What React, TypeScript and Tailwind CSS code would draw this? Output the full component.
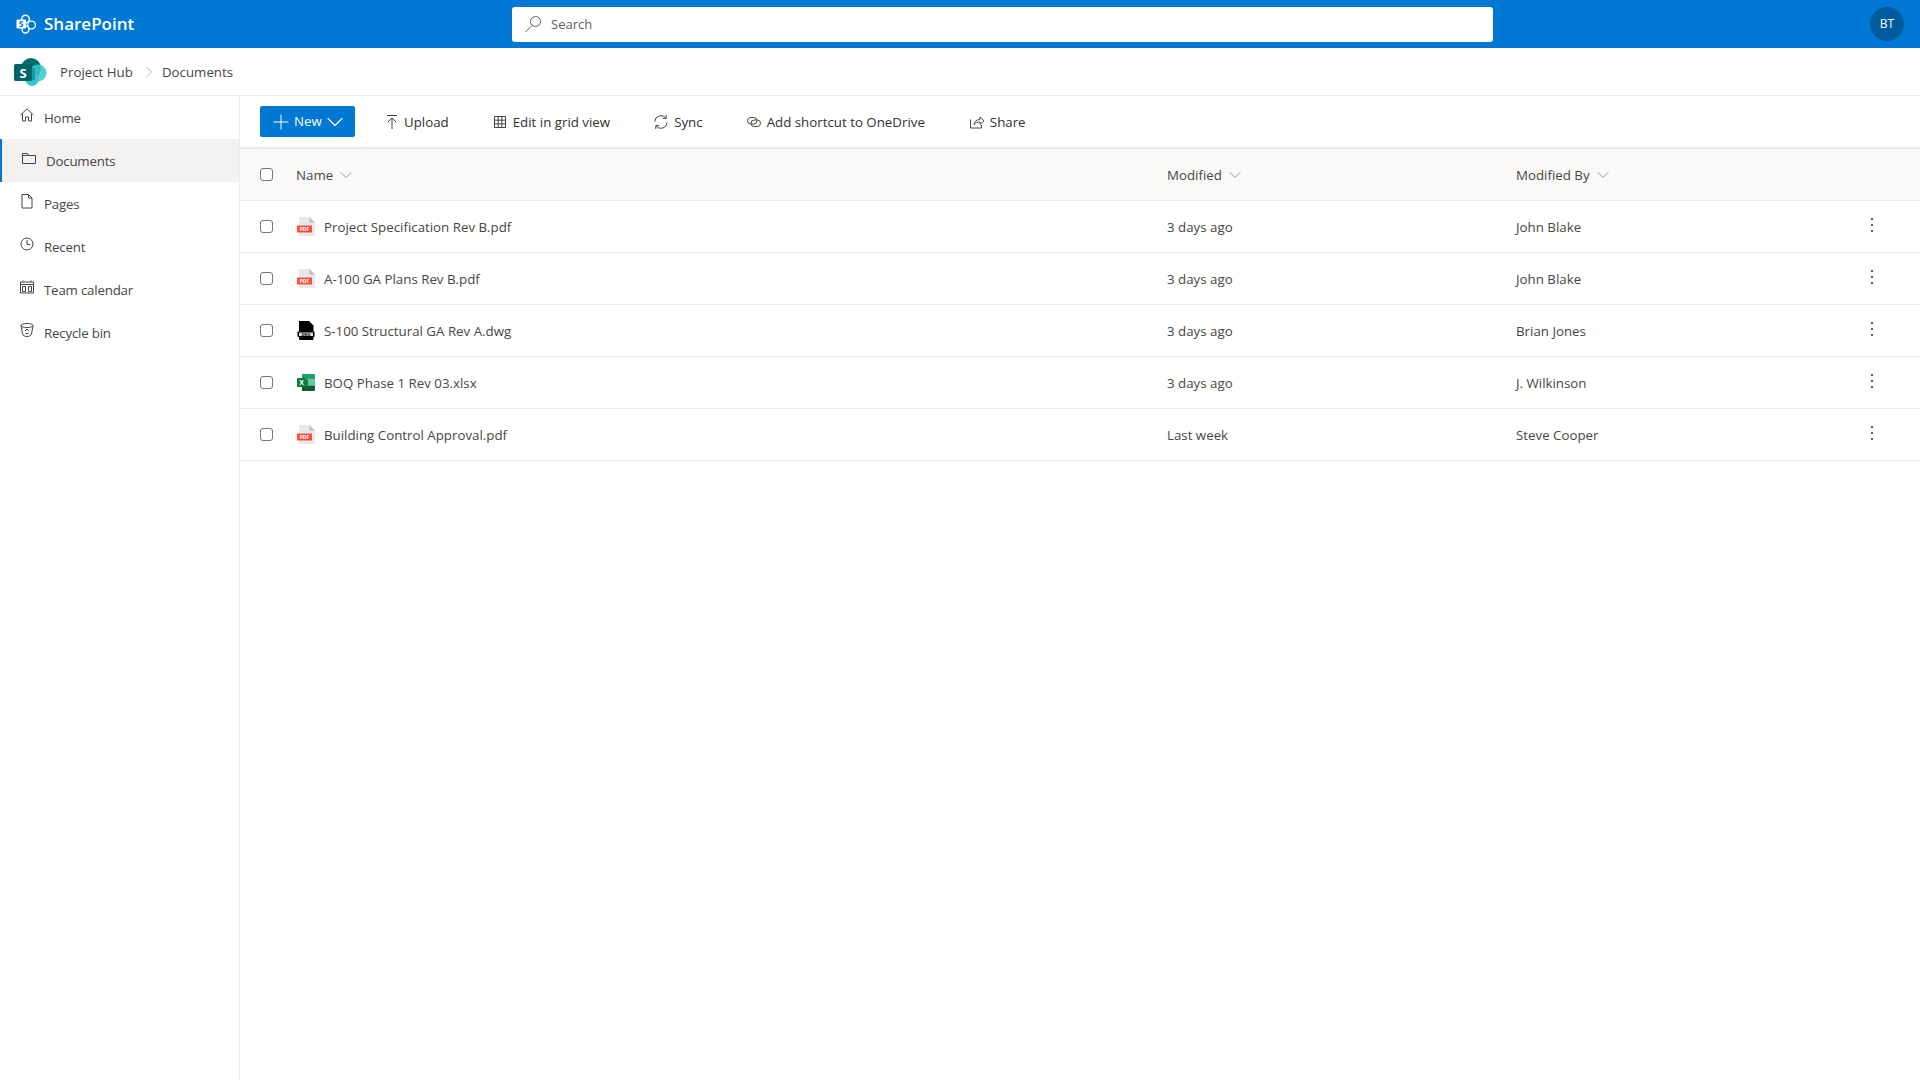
import { ChevronDown, ChevronRight, Plus } from "lucide-react";

const NAV = [
  { label: "Home", icon: "home" },
  { label: "Documents", icon: "folder", active: true },
  { label: "Pages", icon: "page" },
  { label: "Recent", icon: "clock" },
  { label: "Team calendar", icon: "calendar" },
  { label: "Recycle bin", icon: "bin" },
];

const FILES = [
  { name: "Project Specification Rev B.pdf", type: "pdf", modified: "3 days ago", by: "John Blake" },
  { name: "A-100 GA Plans Rev B.pdf", type: "pdf", modified: "3 days ago", by: "John Blake" },
  { name: "S-100 Structural GA Rev A.dwg", type: "dwg", modified: "3 days ago", by: "Brian Jones" },
  { name: "BOQ Phase 1 Rev 03.xlsx", type: "xlsx", modified: "3 days ago", by: "J. Wilkinson" },
  { name: "Building Control Approval.pdf", type: "pdf", modified: "Last week", by: "Steve Cooper" },
];

function Glyph({ name }: { name: string }) {
  const common = { fill: "none", stroke: "#484644", strokeWidth: 1 };
  return (
    <svg width="16" height="16" viewBox="0 0 16 16" className="shrink-0">
      {name === "home" && <path {...common} d="M1.5 8 8 1.8 14.5 8M3.5 6.5v7.5h3v-4h3v4h3V6.5" />}
      {name === "folder" && <path {...common} d="M1.5 3.5h5l1.5 2h6.5v8h-13zM1.5 5.500h6.500" />}
      {name === "page" && <path {...common} d="M3 1.5h6.500L13 5v10H3zM9.500 1.500V5H13" />}
      {name === "clock" && (
        <g {...common}>
          <circle cx="8" cy="8" r="6" />
          <path d="M8 4v4.500h3" />
        </g>
      )}
      {name === "calendar" && <path {...common} d="M1.500 3h13v11h-13zM1.500 5.500h13M4 1.500V3M12 1.500V3M3.500 7.500h3v5h-3zM9.500 7.500h3v5h-3z" />}
      {name === "bin" && (
        <g {...common}>
          <ellipse cx="8" cy="3.500" rx="6" ry="2" />
          <path d="M2 3.500 3.500 12c.3 1.600 2.500 2.500 4.500 2.500s4.200-.9 4.500-2.500L14 3.500M6 9l2-2 2 2M6.500 11.500h3" />
        </g>
      )}
      {name === "upload" && <path {...common} d="M3 1.500h10M8 15V4M3.800 8.200 8 4l4.200 4.200" />}
      {name === "grid" && <path {...common} d="M2.500 2.500h11v11h-11zM2.500 6.200h11M2.500 9.800h11M6.200 2.500v11M9.800 2.500v11" />}
      {name === "sync" && <path {...common} d="M1.800 7.500A6.200 6.200 0 0 1 13 4.200M13.200 1v3.400h-3.400M14.200 8.500A6.200 6.200 0 0 1 3 11.800M2.800 15v-3.400h3.400" />}
      {name === "shortcut" && (
        <g {...common}>
          <rect x="1.500" y="3.500" width="9.500" height="6.500" rx="3.200" />
          <rect x="5" y="6" width="9.500" height="6.500" rx="3.200" />
        </g>
      )}
      {name === "share" && <path {...common} d="M1.500 5.500v8.500h11V11M5 10.500c.5-3 2.500-5 6-5V3l4 3.800-4 3.800V8c-2.500 0-4.500.8-6 2.500z" />}
    </svg>
  );
}

function SearchGlyph() {
  return (
    <svg width="18" height="18" viewBox="0 0 18 18" className="shrink-0">
      <g fill="none" stroke="#605e5c" strokeWidth="1">
        <circle cx="11.500" cy="6.500" r="5" />
        <path d="M8 10.500 1.500 17" />
      </g>
    </svg>
  );
}

function SharePointMark() {
  return (
    <svg width="21" height="20" viewBox="0 0 21 20" className="shrink-0">
      <g fill="none" stroke="#fff" strokeWidth="1.400">
        <circle cx="9.500" cy="5" r="3.800" />
        <circle cx="15.500" cy="11" r="3.900" />
        <circle cx="9.500" cy="15.500" r="3.500" />
      </g>
      <rect x="0.500" y="5.500" width="9.500" height="9" rx="0.800" fill="#fff" />
      <text x="5.200" y="13.200" textAnchor="middle" fontSize="8.500" fontWeight="700" fill="#0078d4" fontFamily="Open Sans, sans-serif">S</text>
    </svg>
  );
}

function SiteLogo() {
  return (
    <svg width="33" height="28" viewBox="0 0 33 28" className="shrink-0">
      <circle cx="17" cy="10" r="10" fill="#036c70" />
      <circle cx="24" cy="15" r="8.500" fill="#37c6d0" opacity="0.85" />
      <circle cx="18" cy="21.500" r="6.500" fill="#37c6d0" />
      <path d="M14 10h7v12a6.500 6.500 0 0 1-7-2z" fill="#1a9ba1" />
      <rect x="0" y="6" width="18" height="17" rx="1.500" fill="#03646a" />
      <text x="9" y="19.500" textAnchor="middle" fontSize="13" fontWeight="700" fill="#fff" fontFamily="Open Sans, sans-serif">S</text>
    </svg>
  );
}

function FileIcon({ type }: { type: string }) {
  if (type === "xlsx") {
    return (
      <svg width="18" height="17" viewBox="0 0 18 17" className="shrink-0">
        <path d="M5 0h12a1 1 0 0 1 1 1v4.500H5z" fill="#21a366" />
        <path d="M5 5.500h6.500v6H5z" fill="#107c41" />
        <path d="M11.500 5.500H18v6h-6.500z" fill="#33c481" opacity="0.8" />
        <path d="M5 11.500h13V16a1 1 0 0 1-1 1H5z" fill="#185c37" />
        <rect x="0" y="4" width="9" height="9" rx="0.800" fill="#107c41" />
        <text x="4.500" y="11.300" textAnchor="middle" fontSize="7" fontWeight="700" fill="#fff" fontFamily="Open Sans, sans-serif">X</text>
      </svg>
    );
  }
  if (type === "dwg") {
    return (
      <svg width="18" height="19" viewBox="0 0 18 19" className="shrink-0">
        <path d="M2 0h10l4.500 4.500V18a1 1 0 0 1-1 1H3a1 1 0 0 1-1-1z" fill="#000" />
        <rect x="0.500" y="10.500" width="17" height="5.500" rx="0.800" fill="#000" />
        <rect x="2" y="11.500" width="14" height="3.500" fill="#d8d8d8" />
        <text x="9" y="14.500" textAnchor="middle" fontSize="3.500" fontWeight="700" fill="#000" fontFamily="Open Sans, sans-serif">DWG</text>
      </svg>
    );
  }
  return (
    <svg width="18" height="19" viewBox="0 0 18 19" className="shrink-0">
      <path d="M2 0h10.500L18 5.500V19H2z" fill="#e8e8ea" />
      <path d="M12.500 0 18 5.500h-5.500z" fill="#bfbfc4" />
      <rect x="0" y="8.500" width="15" height="7" fill="#f4503c" />
      <text x="7.500" y="14.200" textAnchor="middle" fontSize="5" fontWeight="700" fill="#fff" fontFamily="Open Sans, sans-serif">PDF</text>
    </svg>
  );
}

function Check() {
  return <span className="w-[13px] h-[13px] shrink-0 rounded-[3px] border border-[#767676] bg-white" />;
}

function ToolbarButton({ icon, label, className }: { icon: string; label: string; className?: string }) {
  return (
    <div className={"flex items-center text-[#323130] " + (className ?? "")}>
      <Glyph name={icon} />
      <span className="pt-[2px]">{label}</span>
    </div>
  );
}

export default function App() {
  return (
    <div className="w-[1920px] h-[1080px] overflow-hidden flex flex-col bg-white text-[13.3px] text-[#484644] font-['Open_Sans',sans-serif]">
      {/* Suite bar */}
      <header className="h-12 shrink-0 bg-[#0078d4] flex items-center pl-4 pr-4">
        <div className="w-[496px] flex items-center gap-[7px]">
          <SharePointMark />
          <span className="text-white text-[17px] font-semibold">SharePoint</span>
        </div>
        <div className="w-[981px] h-[35px] bg-white rounded-[3px] flex items-center pl-3 gap-[9px] text-[#605e5c]">
          <SearchGlyph />
          <span className="text-[13px] pt-px">Search</span>
        </div>
        <div className="ml-auto w-[34px] h-[34px] rounded-full bg-[#005a9e] flex items-center justify-center text-white text-[12px] font-medium">BT</div>
      </header>

      {/* Breadcrumb */}
      <div className="h-12 shrink-0 border-b border-[#edebe9] flex items-center pl-[14px]">
        <SiteLogo />
        <span className="ml-[13px] pt-[2px]">Project Hub</span>
        <ChevronRight className="w-5 h-5 ml-[6px] mr-[3px] text-[#a19f9d]" strokeWidth={1} />
        <span className="pt-[2px]">Documents</span>
      </div>

      <div className="flex-1 flex min-h-0">
        {/* Site nav */}
        <nav className="w-[240px] shrink-0 border-r border-[#edebe9] tracking-[-0.2px]">
          {NAV.map((item) => (
            <div
              key={item.label}
              className={
                item.active
                  ? "h-[43px] flex items-center gap-[9px] pl-[19px] bg-[#f3f2f1] border-l-2 border-[#0078d4]"
                  : "h-[43px] flex items-center gap-[9px] pl-[19px]"
              }
            >
              <span className="-mt-[5px]"><Glyph name={item.icon} /></span>
              <span className="pt-[2px]">{item.label}</span>
            </div>
          ))}
        </nav>

        <main className="flex-1 min-w-0">
          {/* Command bar */}
          <div className="h-[53px] border-b-2 border-[#edebe9] flex items-center pl-[20px]">
            <div className="w-[95px] h-[31px] rounded-[2px] bg-[#0078d4] text-white flex items-center pl-[9px]">
              <Plus className="w-6 h-6 shrink-0" strokeWidth={1} />
              <span className="ml-px">New</span>
              <ChevronDown className="w-7 h-7 -ml-px shrink-0" strokeWidth={1} />
            </div>
            <ToolbarButton icon="upload" label="Upload" className="ml-[29px] gap-[4px]" />
            <ToolbarButton icon="grid" label="Edit in grid view" className="ml-[43px] gap-[5px]" />
            <ToolbarButton icon="sync" label="Sync" className="ml-[43px] gap-[5px]" />
            <ToolbarButton icon="shortcut" label="Add shortcut to OneDrive" className="ml-[43px] gap-[5px]" />
            <ToolbarButton icon="share" label="Share" className="ml-[44px] gap-[5px]" />
          </div>

          {/* Column headers */}
          <div className="h-[52px] bg-[#faf9f8] border-b border-[#edebe9] flex items-center pl-5">
            <Check />
            <div className="ml-[23px] w-[871px] flex items-center gap-[3px]">
              <span className="pt-[2px]">Name</span>
              <ChevronDown className="w-5 h-5 text-[#8a8886]" strokeWidth={1} />
            </div>
            <div className="w-[349px] flex items-center gap-[3px]">
              <span className="pt-[2px]">Modified</span>
              <ChevronDown className="w-5 h-5 text-[#8a8886]" strokeWidth={1} />
            </div>
            <div className="flex items-center gap-[3px]">
              <span className="pt-[2px]">Modified By</span>
              <ChevronDown className="w-5 h-5 text-[#8a8886]" strokeWidth={1} />
            </div>
          </div>

          {/* File rows */}
          {FILES.map((file) => (
            <div key={file.name} className="h-[52px] border-b border-[#edebe9] flex items-center pl-5">
              <Check />
              <div className="ml-[24px] w-[870px] flex items-center">
                <span className="w-[27px]"><FileIcon type={file.type} /></span>
                <span className="pt-[2px]">{file.name}</span>
              </div>
              <div className="w-[349px] pt-[2px]">{file.modified}</div>
              <div className="w-[355px] pt-[2px]">{file.by}</div>
              <div className="flex flex-col gap-[4px] -mt-[3px]">
                <span className="w-[2px] h-[2px] bg-[#605e5c]" />
                <span className="w-[2px] h-[2px] bg-[#605e5c]" />
                <span className="w-[2px] h-[2px] bg-[#605e5c]" />
              </div>
            </div>
          ))}
        </main>
      </div>
    </div>
  );
}
